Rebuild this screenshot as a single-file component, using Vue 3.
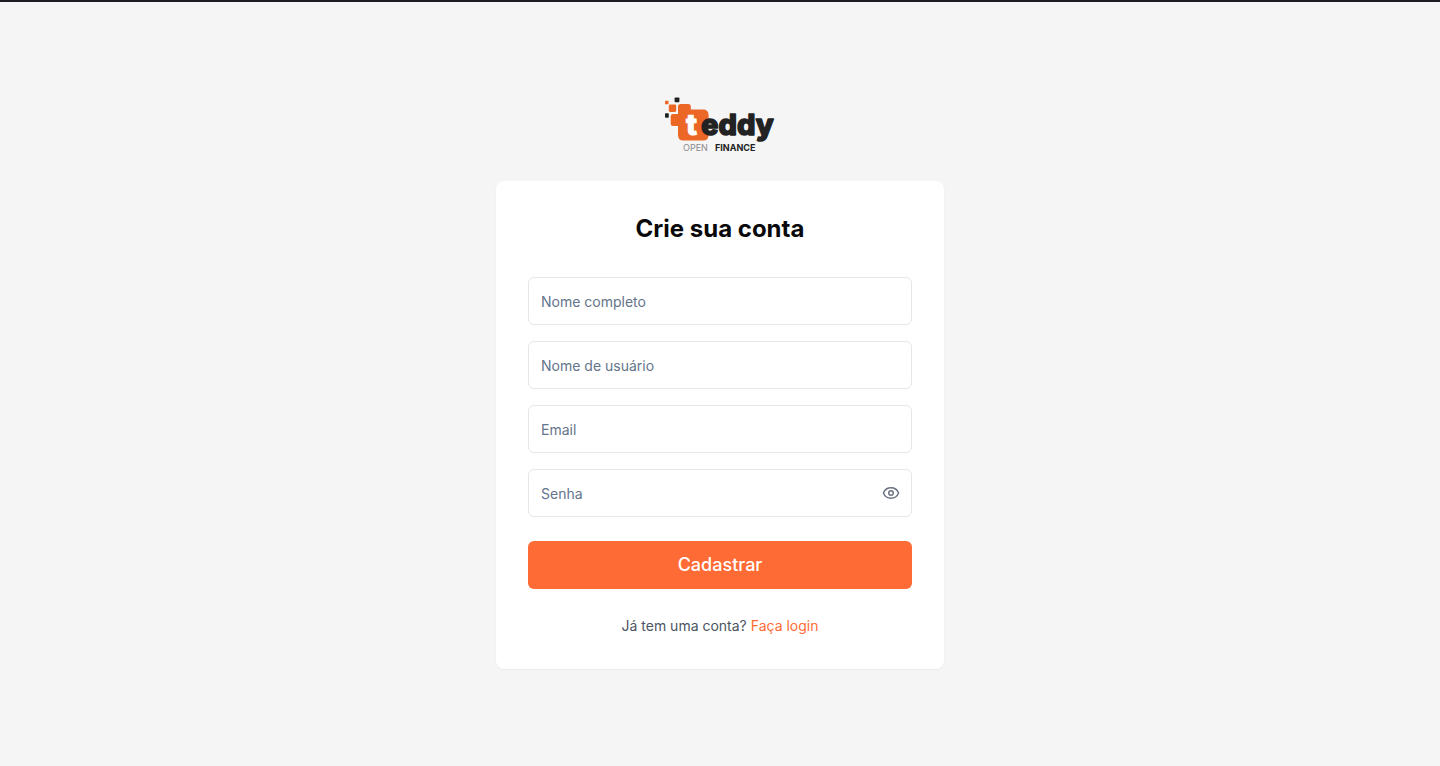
<script setup>
import { reactive, ref } from 'vue'

const fields = [
  { id: 'name', label: 'Nome completo', type: 'text', autocomplete: 'name' },
  { id: 'username', label: 'Nome de usuário', type: 'text', autocomplete: 'username' },
  { id: 'email', label: 'Email', type: 'email', autocomplete: 'email' },
]
const form = reactive({ name: '', username: '', email: '', password: '' })
const visible = ref(false)
</script>

<template>
  <main class="page">
    <svg class="logo" viewBox="0 0 110 56" role="img" aria-label="Teddy Open Finance">
      <g fill="#ec6726">
        <rect x="0" y="3.7" width="3.5" height="3.5" rx="0.5" />
        <rect x="3.8" y="7.4" width="7.4" height="7.6" rx="1.4" />
        <path d="M15.5 7H23.2Q25.8 7 25.8 9.6V12.6H38Q43.6 12.6 43.6 18.2V37.9Q43.6 43.5 38 43.5H18.5Q13 43.5 13 38V29H8.2Q5.7 29 5.7 26.5V19.5Q5.7 17 8.2 17H13V9.5Q13 7 15.5 7Z" />
      </g>
      <rect x="9.6" y="0.4" width="4.8" height="4.8" rx="0.8" fill="#222223" />
      <rect x="0" y="16.3" width="3.8" height="4.4" rx="0.8" fill="#222223" />
      <text class="mark mark-t" x="21" y="38">t</text>
      <text class="mark" x="36" y="38">eddy</text>
      <text class="open" x="18" y="54">OPEN</text>
      <text class="finance" x="50" y="54">FINANCE</text>
    </svg>

    <section class="card">
      <h1>Crie sua conta</h1>
      <form @submit.prevent>
        <div class="fields">
          <input
            v-for="field in fields"
            :key="field.id"
            v-model="form[field.id]"
            :type="field.type"
            :name="field.id"
            :placeholder="field.label"
            :aria-label="field.label"
            :autocomplete="field.autocomplete"
          />
          <div class="password">
            <input
              v-model="form.password"
              :type="visible ? 'text' : 'password'"
              name="password"
              placeholder="Senha"
              aria-label="Senha"
              autocomplete="new-password"
            />
            <button type="button" class="toggle" aria-label="Mostrar senha" @click="visible = !visible">
              <svg viewBox="0 0 24 24" fill="none" stroke="currentColor" stroke-width="2" stroke-linecap="round" stroke-linejoin="round">
                <path d="M2.062 12.348a1 1 0 0 1 0-.696 10.75 10.75 0 0 1 19.876 0 1 1 0 0 1 0 .696 10.75 10.75 0 0 1-19.876 0" />
                <circle cx="12" cy="12" r="3" />
              </svg>
            </button>
          </div>
        </div>
        <button type="submit" class="submit">Cadastrar</button>
      </form>
      <div class="footer">
        <span class="note">Já tem uma conta? <a href="#login">Faça login</a></span>
      </div>
    </section>
  </main>
</template>

<style>
body {
  margin: 0;
}
</style>

<style scoped>
.page,
.page * {
  box-sizing: border-box;
}
.page {
  min-height: 100vh;
  display: flex;
  flex-direction: column;
  align-items: center;
  justify-content: center;
  gap: 28px;
  padding: 16px;
  background: #f5f5f5;
  box-shadow: inset 0 2px #1c1d21;
  color: #09090b;
  font-family: Inter, "Liberation Sans", sans-serif;
}
.logo {
  display: block;
  width: 110px;
  height: 56px;
  overflow: visible;
}
.mark {
  font-size: 29px;
  font-weight: 800;
  fill: #222223;
  stroke: #222223;
  stroke-width: 1.4px;
  stroke-linejoin: round;
}
.mark-t {
  fill: #ffffff;
  stroke: #ffffff;
  stroke-width: 1px;
}
.open,
.finance {
  font-size: 9px;
}
.open {
  font-weight: 400;
  fill: #8a8a8a;
}
.finance {
  font-weight: 700;
  fill: #222223;
}
.card {
  width: 100%;
  max-width: 448px;
  padding: 32px;
  border-radius: 8px;
  background: #ffffff;
  box-shadow: 0 1px 2px rgba(0, 0, 0, 0.05);
}
h1 {
  margin: 0 0 32px;
  font-size: 24px;
  font-weight: 700;
  line-height: 32px;
  text-align: center;
}
.fields {
  display: grid;
  gap: 16px;
}
input {
  display: block;
  width: 100%;
  height: 48px;
  padding: 8px 12px;
  border: 1px solid #e5e7eb;
  border-radius: 6px;
  background: #ffffff;
  color: #09090b;
  font: inherit;
  font-size: 14px;
  line-height: 20px;
}
input::placeholder {
  color: #64748b;
  opacity: 1;
}
.password {
  position: relative;
}
.password input {
  padding-right: 40px;
}
.toggle {
  position: absolute;
  top: 0;
  bottom: 0;
  right: 12px;
  display: flex;
  align-items: center;
  padding: 0;
  border: 0;
  background: none;
  color: #6b7280;
  cursor: pointer;
}
.toggle svg {
  width: 18px;
  height: 18px;
}
.submit {
  display: block;
  width: 100%;
  height: 48px;
  margin-top: 24px;
  padding: 0 16px;
  border: 0;
  border-radius: 6px;
  background: #ff6b35;
  color: #ffffff;
  font: inherit;
  font-size: 18px;
  font-weight: 500;
  line-height: 28px;
  cursor: pointer;
}
.footer {
  margin-top: 24px;
  font-size: 16px;
  line-height: 24px;
  text-align: center;
}
.note {
  color: #4b5563;
  font-size: 14px;
  line-height: 20px;
}
a {
  color: #ff6b35;
  text-decoration: none;
}
</style>
